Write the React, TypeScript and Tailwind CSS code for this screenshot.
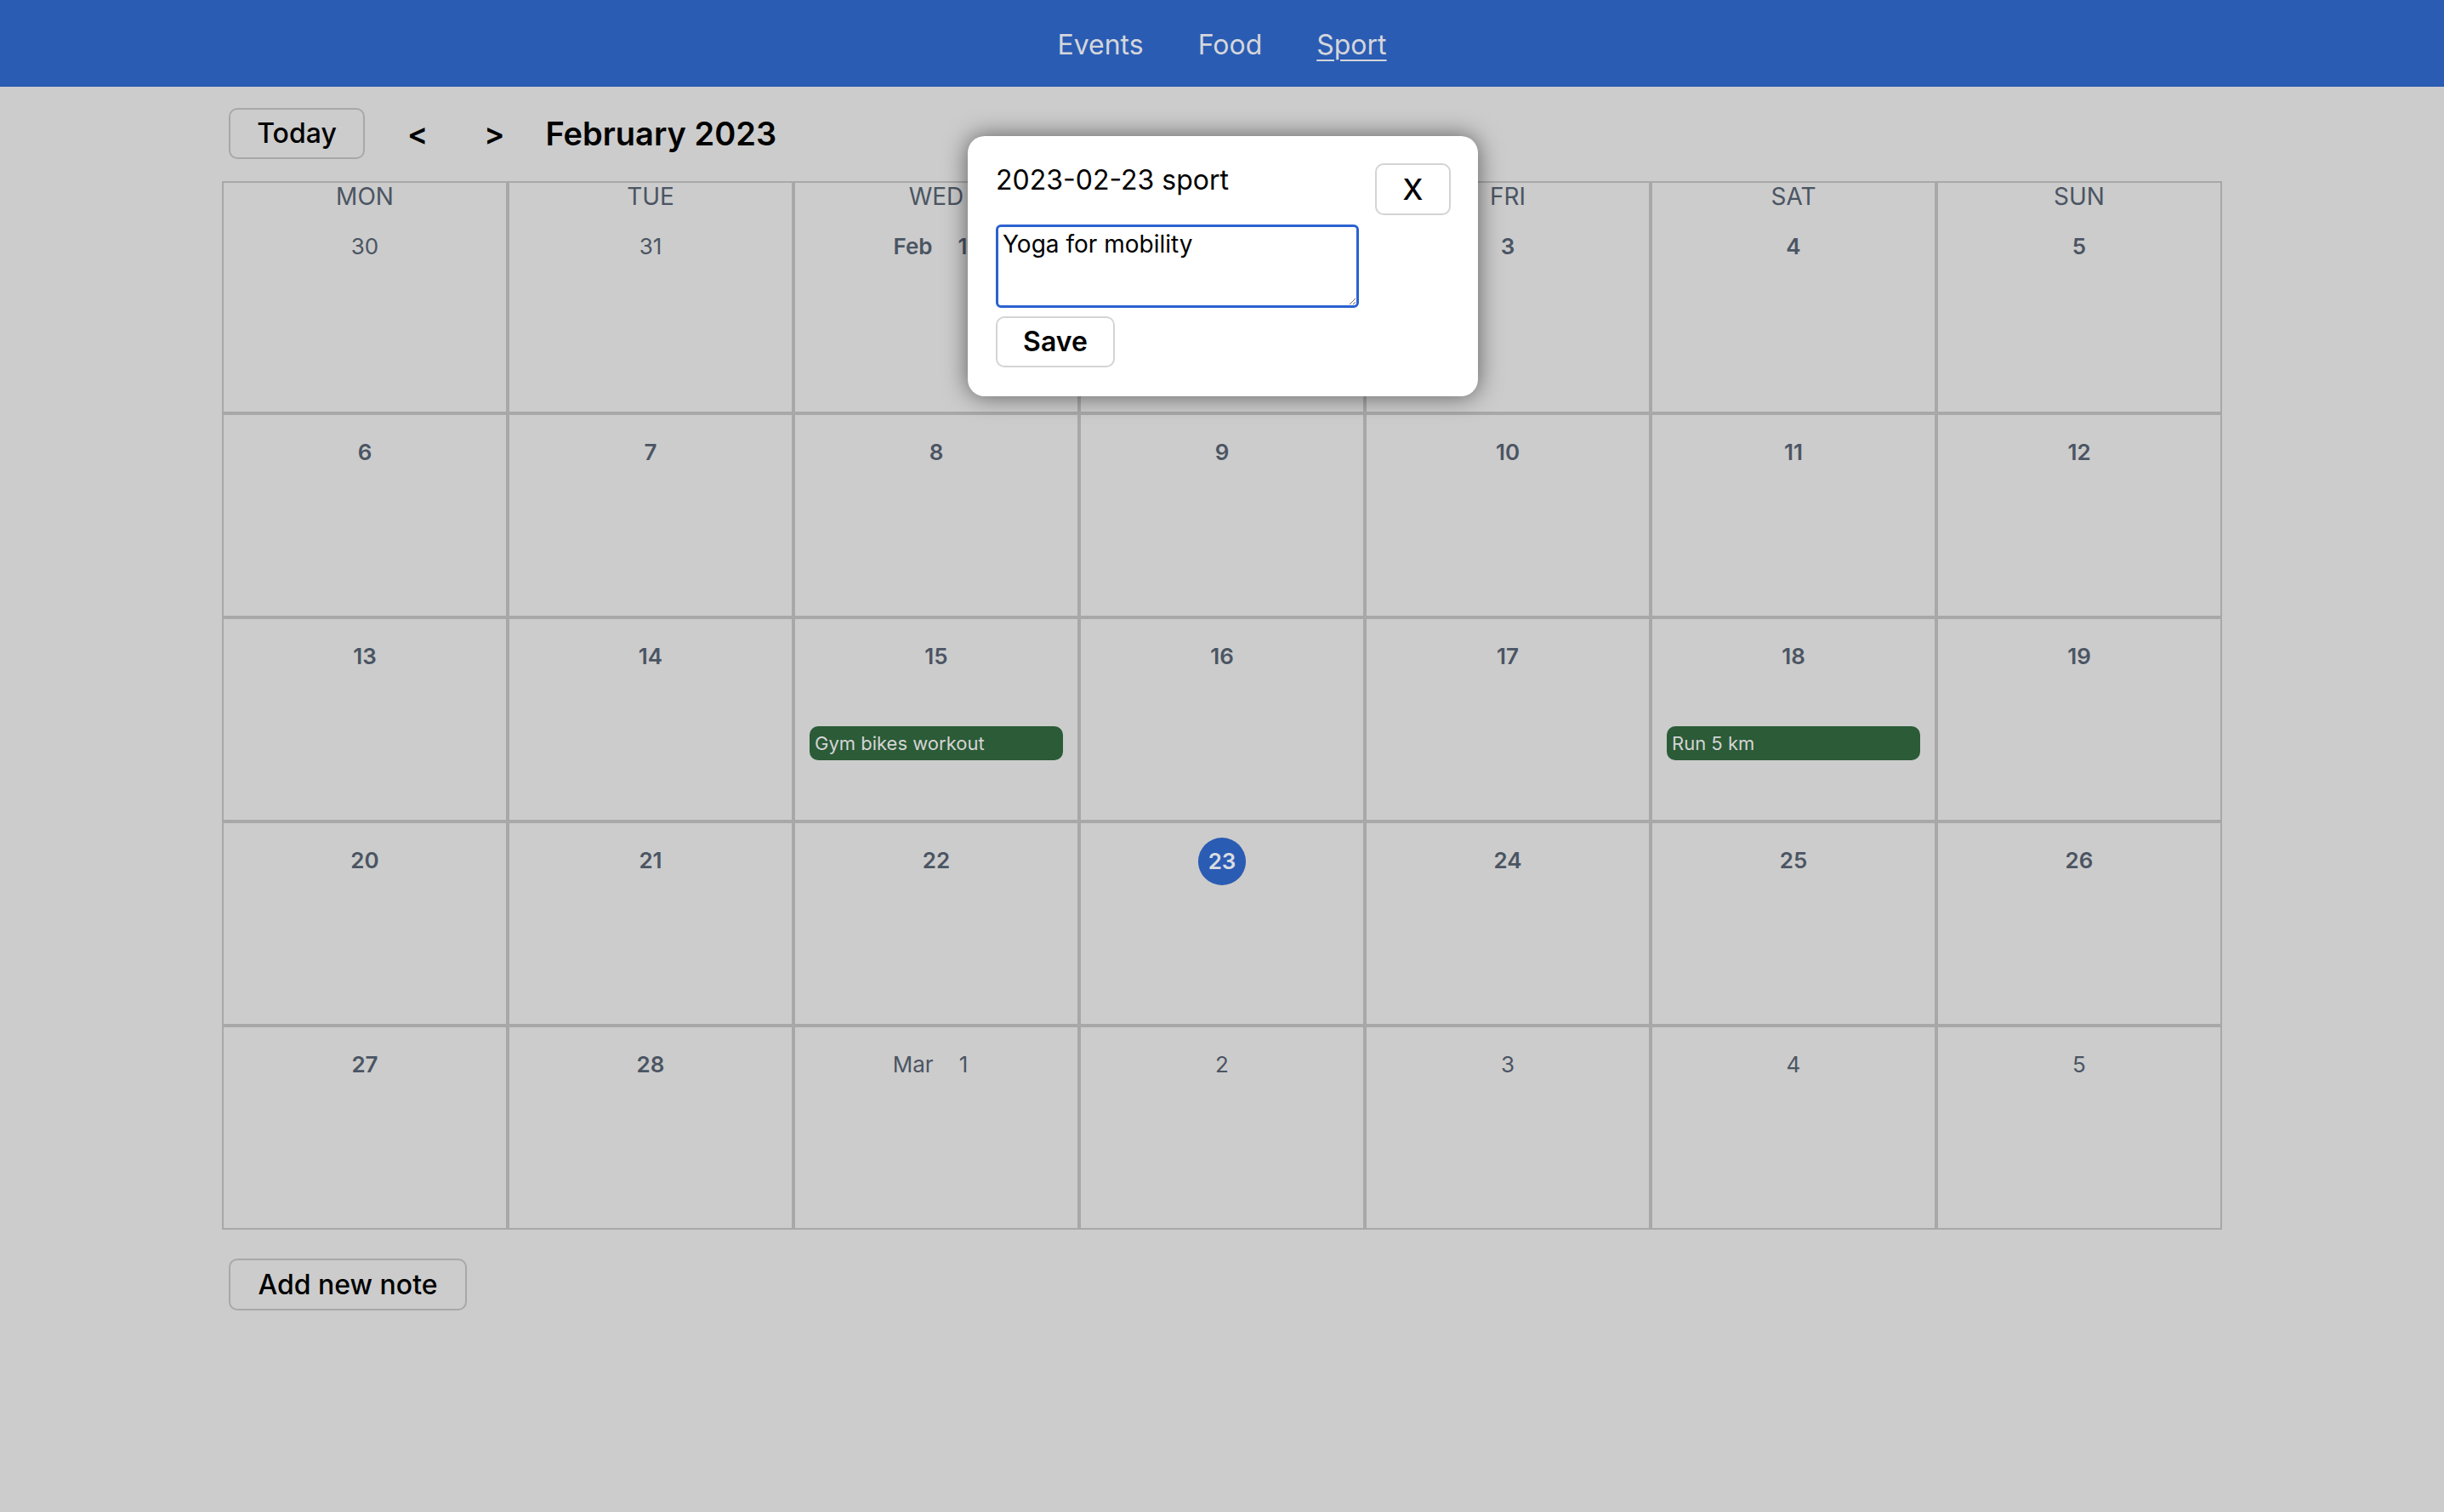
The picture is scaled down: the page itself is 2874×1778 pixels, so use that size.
import React from "react";

type Day = {
  n: number;
  inMonth: boolean;
  prefix?: string;
  event?: string;
  today?: boolean;
};

const weekdays = ["MON", "TUE", "WED", "THU", "FRI", "SAT", "SUN"];

const weeks: Day[][] = [
  [
    { n: 30, inMonth: false },
    { n: 31, inMonth: false },
    { n: 1, inMonth: true, prefix: "Feb" },
    { n: 2, inMonth: true },
    { n: 3, inMonth: true },
    { n: 4, inMonth: true },
    { n: 5, inMonth: true },
  ],
  [6, 7, 8, 9, 10, 11, 12].map((n) => ({ n, inMonth: true })),
  [
    { n: 13, inMonth: true },
    { n: 14, inMonth: true },
    { n: 15, inMonth: true, event: "Gym bikes workout" },
    { n: 16, inMonth: true },
    { n: 17, inMonth: true },
    { n: 18, inMonth: true, event: "Run 5 km" },
    { n: 19, inMonth: true },
  ],
  [
    { n: 20, inMonth: true },
    { n: 21, inMonth: true },
    { n: 22, inMonth: true },
    { n: 23, inMonth: true, today: true },
    { n: 24, inMonth: true },
    { n: 25, inMonth: true },
    { n: 26, inMonth: true },
  ],
  [
    { n: 27, inMonth: true },
    { n: 28, inMonth: true },
    { n: 1, inMonth: false, prefix: "Mar" },
    { n: 2, inMonth: false },
    { n: 3, inMonth: false },
    { n: 4, inMonth: false },
    { n: 5, inMonth: false },
  ],
];

function Cell({ day, label }: { day: Day; label?: string }) {
  const weight = day.inMonth ? "font-semibold" : "font-normal";
  return (
    <div
      className={`border-2 border-[#a8a8a8] flex flex-col ${label ? "h-[273px]" : "h-[240px]"}`}
    >
      {label && (
        <div className="text-center text-[28px] leading-[33px] text-[#4b5563] font-normal">
          {label}
        </div>
      )}
      <div
        className={`${label ? "mt-[26px]" : "mt-[28px]"} h-[32px] flex items-center justify-center text-[26px] leading-[32px] text-[#4b5563] ${weight} ${day.prefix ? "pr-[14px]" : ""}`}
      >
        {day.today ? (
          <div className="mt-[2px] w-[56px] h-[56px] shrink-0 rounded-full bg-[#2b5cb3] text-[#d9dce2] font-semibold flex items-center justify-center">
            {day.n}
          </div>
        ) : day.prefix ? (
          <>
            <span className="mr-[30px]">{day.prefix}</span>
            <span>{day.n}</span>
          </>
        ) : (
          <span>{day.n}</span>
        )}
      </div>
      {day.event && (
        <div className="mt-[66px] mx-[17px] h-[40px] rounded-[10px] bg-[#2b5b37] text-[#d4d4d4] text-[22px] pl-[6px] flex items-center">
          {day.event}
        </div>
      )}
    </div>
  );
}

export default function App() {
  return (
    <div className="relative min-h-screen bg-[#cccccc] font-['Inter','Noto_Sans',sans-serif] text-black">
      <nav className="h-[102px] pt-[3px] bg-[#2b5cb3] flex items-center justify-center gap-[64px] text-[32px] text-[#d4d6db]">
        <span>Events</span>
        <span>Food</span>
        <span className="underline underline-offset-[6px] decoration-[2px]">Sport</span>
      </nav>

      <div className="w-[2352px] mx-auto">
        <div className="mt-[25px] pl-[8px] flex items-center h-[60px]">
          <button className="w-[160px] h-[60px] border-2 border-[#a8a8a8] rounded-[10px] text-[32px] font-medium text-black">
            Today
          </button>
          <span className="ml-[50px] text-[36px] font-semibold">&lt;</span>
          <span className="ml-[66px] text-[36px] font-semibold">&gt;</span>
          <span className="ml-[48px] text-[38px] font-semibold">February 2023</span>
        </div>

        <div className="mt-[26px] grid grid-cols-7">
          {weeks.map((week, wi) =>
            week.map((day, di) => (
              <Cell
                key={`${wi}-${di}`}
                day={day}
                label={wi === 0 ? weekdays[di] : undefined}
              />
            ))
          )}
        </div>

        <div className="mt-[34px] pl-[8px]">
          <button className="w-[280px] h-[61px] border-2 border-[#a8a8a8] rounded-[10px] text-[32px] font-medium text-black">
            Add new note
          </button>
        </div>
      </div>

      <div className="absolute left-[1138px] top-[160px] w-[600px] h-[306px] bg-white rounded-[20px] shadow-[0_0_28px_rgba(0,0,0,0.55)] px-[33px] pt-[32px]">
        <div className="text-[32px] leading-[40px] text-black">2023-02-23 sport</div>
        <button className="absolute right-[32px] top-[32px] w-[89px] h-[61px] border-2 border-[#d4d4d4] rounded-[10px] text-[34px] font-medium text-black">
          X
        </button>
        <textarea
          className="block mt-[32px] w-[427px] h-[98px] border-[3px] border-[#2b62d0] rounded-[6px] px-[5px] pt-[3px] text-[28px] leading-[34px] text-black outline-none resize"
          defaultValue="Yoga for mobility"
        />
        <button className="block mt-[10px] w-[140px] h-[60px] border-2 border-[#d4d4d4] rounded-[10px] text-[32px] font-semibold text-black">
          Save
        </button>
      </div>
    </div>
  );
}
